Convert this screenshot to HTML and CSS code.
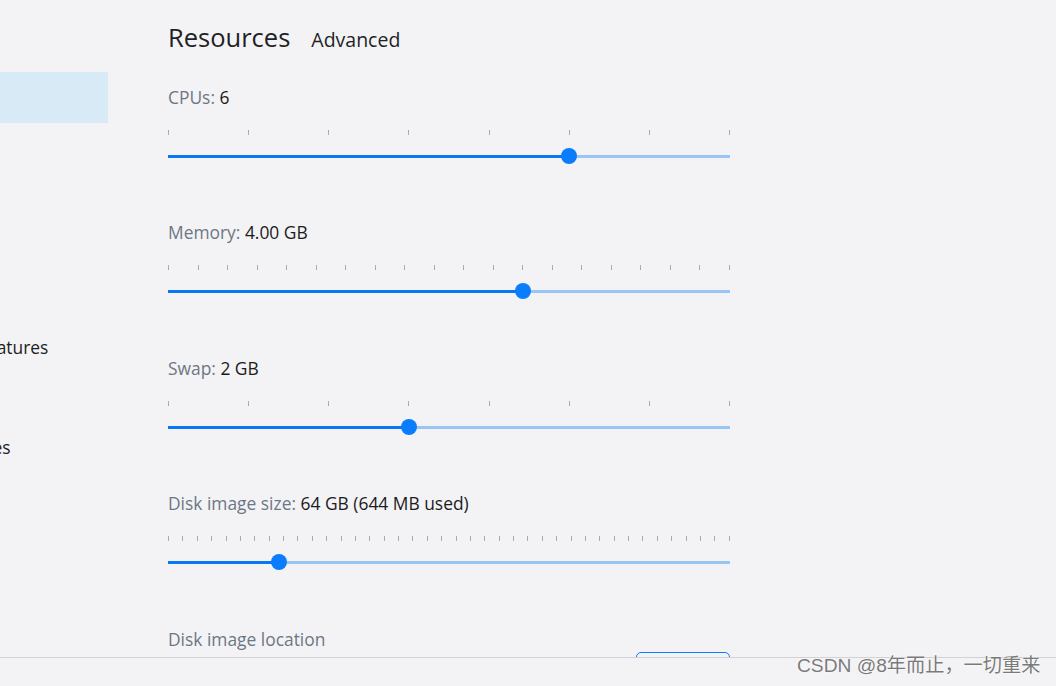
FILE: index.html
```html
<!DOCTYPE html>
<html lang="en">
<head>
<meta charset="utf-8">
<title>Settings - Resources</title>
<link rel="stylesheet" href="styles.css">
</head>
<body>
<div class="app">
  <div class="main">
    <nav class="sidebar">
      <ul class="nav">
        <li class="nav-item">General</li>
        <li class="nav-item">Resources</li>
        <li class="nav-item sub selected">Advanced</li>
        <li class="nav-item sub">File sharing</li>
        <li class="nav-item sub">Proxies</li>
        <li class="nav-item sub">Network</li>
        <li class="nav-item">Docker Engine</li>
        <li class="nav-item">Experimental Features</li>
        <li class="nav-item">Kubernetes</li>
        <li class="nav-item">Software Updates</li>
      </ul>
    </nav>
    <section class="content">
      <h1 class="title">Resources<span class="subtitle">Advanced</span></h1>

      <div class="setting">
        <div class="label">CPUs: <span class="value">6</span></div>
        <div class="ticks">
          <i></i><i></i><i></i><i></i><i></i><i></i><i></i><i></i>
        </div>
        <div class="slider">
          <div class="track"><div class="fill" style="width:71.43%"></div></div>
          <div class="thumb" style="left:71.43%"></div>
        </div>
      </div>

      <div class="setting odd">
        <div class="label">Memory: <span class="value">4.00 GB</span></div>
        <div class="ticks">
          <i></i><i></i><i></i><i></i><i></i><i></i><i></i><i></i><i></i><i></i>
          <i></i><i></i><i></i><i></i><i></i><i></i><i></i><i></i><i></i><i></i>
        </div>
        <div class="slider">
          <div class="track"><div class="fill" style="width:63.16%"></div></div>
          <div class="thumb" style="left:63.16%"></div>
        </div>
      </div>

      <div class="setting even">
        <div class="label">Swap: <span class="value">2 GB</span></div>
        <div class="ticks">
          <i></i><i></i><i></i><i></i><i></i><i></i><i></i><i></i>
        </div>
        <div class="slider">
          <div class="track"><div class="fill" style="width:42.86%"></div></div>
          <div class="thumb" style="left:42.86%"></div>
        </div>
      </div>

      <div class="setting odd">
        <div class="label">Disk image size: <span class="value">64 GB (644 MB used)</span></div>
        <div class="ticks">
          <i></i><i></i><i></i><i></i><i></i><i></i><i></i><i></i><i></i><i></i>
          <i></i><i></i><i></i><i></i><i></i><i></i><i></i><i></i><i></i><i></i>
          <i></i><i></i><i></i><i></i><i></i><i></i><i></i><i></i><i></i><i></i>
          <i></i><i></i><i></i><i></i><i></i><i></i><i></i><i></i><i></i><i></i>
        </div>
        <div class="slider">
          <div class="track"><div class="fill" style="width:19.75%"></div></div>
          <div class="thumb" style="left:19.75%"></div>
        </div>
      </div>

      <div class="setting even location">
        <div class="label">Disk image location</div>
        <div class="browse-row"><button class="browse">Browse</button></div>
      </div>
    </section>
  </div>
  <footer class="footer"></footer>
  <div class="watermark">CSDN @8年而止，一切重来</div>
</div>
</body>
</html>
```

FILE: styles.css
```css
* { box-sizing: border-box; }

html, body {
  margin: 0;
  padding: 0;
}

body {
  width: 1056px;
  height: 686px;
  overflow: hidden;
  background: #f3f3f6;
  font-family: "Open Sans", "Noto Sans", sans-serif;
  color: #1d1d22;
}

.app {
  position: relative;
  display: flex;
  flex-direction: column;
  height: 686px;
}

.main {
  flex: 1;
  display: flex;
  overflow: hidden;
  min-height: 0;
}

/* Sidebar (scrolled horizontally, only the right part visible) */
.sidebar {
  width: 108px;
  flex: none;
  overflow: hidden;
}

.nav {
  list-style: none;
  margin: -28px 0 0 -134px;
  padding: 0;
  width: 242px;
}

.nav-item {
  height: 50px;
  line-height: 48px;
  font-size: 17.4px;
  white-space: nowrap;
  color: #1d1d22;
}

.nav-item.sub {
  padding-left: 16px;
}

.nav-item.selected {
  background: #d8eaf6;
  height: 51px;
  line-height: 51px;
}

/* Content */
.content {
  flex: 1;
  padding: 19px 0 0 60px;
  min-width: 0;
}

.title {
  margin: 0;
  font-size: 25.5px;
  line-height: 36px;
  font-weight: 400;
  color: #1f1f25;
}

.subtitle {
  font-size: 19.5px;
  margin-left: 21px;
  color: #1f1f25;
}

.setting {
  width: 562px;
  margin-top: 28px;
}

.setting.odd {
  margin-top: 57px;
}

.setting.even {
  margin-top: 58px;
}

.label {
  font-size: 17.4px;
  line-height: 22px;
  color: #6d7784;
}

.value {
  color: #1b1b20;
}

.ticks {
  display: flex;
  justify-content: space-between;
  margin-top: 22px;
  height: 5px;
}

.ticks i {
  display: block;
  width: 1px;
  height: 5px;
  background: #ababab;
}

.slider {
  position: relative;
  height: 16px;
  margin-top: 13px;
  padding-top: 7px;
}

.track {
  width: 100%;
  height: 3px;
  background: #98c5f3;
}

.fill {
  height: 3px;
  background: #0877f2;
}

.thumb {
  position: absolute;
  top: 0;
  width: 16px;
  height: 16px;
  margin-left: -8px;
  border-radius: 50%;
  background: #0a7dfd;
}

.browse-row {
  display: flex;
  justify-content: flex-end;
  margin-top: 2px;
}

.browse {
  width: 94px;
  height: 32px;
  border: 1px solid #0a7cff;
  border-radius: 5px;
  background: transparent;
  color: #0a7cff;
  font-family: "Open Sans", sans-serif;
  font-size: 14px;
}

.footer {
  flex: none;
  height: 29px;
  border-top: 1px solid #d2d2d6;
  background: #f3f3f6;
}

.watermark {
  position: absolute;
  left: 797px;
  top: 653px;
  font-family: "Liberation Sans", "Noto Sans CJK SC", sans-serif;
  font-size: 19.2px;
  line-height: 26px;
  color: #7a7a7a;
  text-shadow: 0 0 1px #ffffff, 0 0 2px #ffffff;
  white-space: nowrap;
}
```
